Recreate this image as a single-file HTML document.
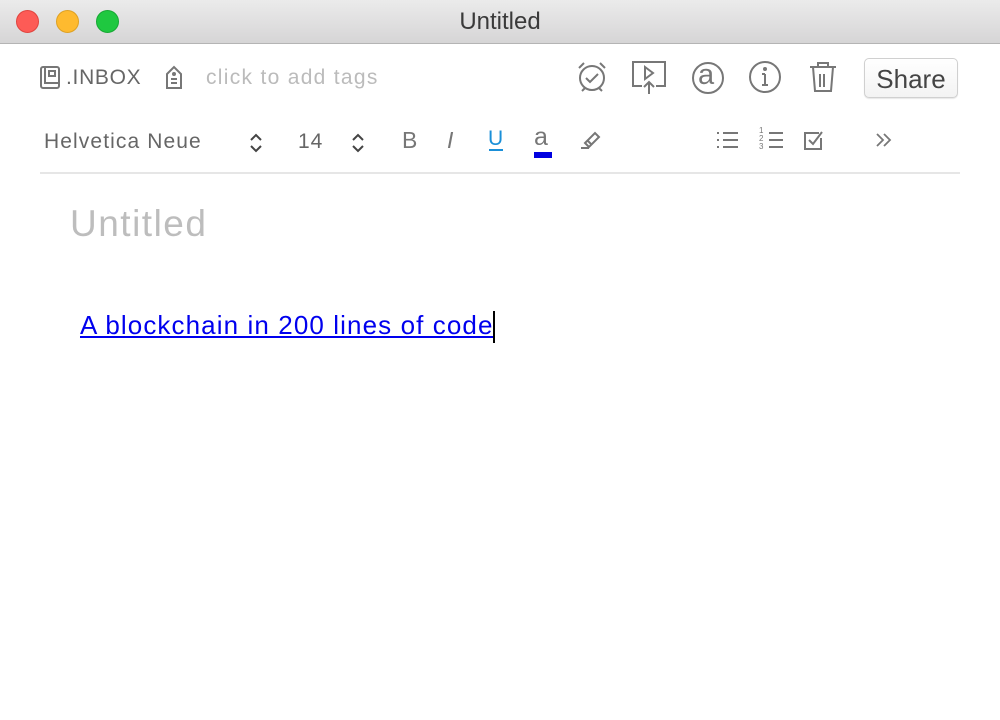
<!DOCTYPE html>
<html><head><style>
body{margin:0;width:1000px;height:720px;background:#fff;font-family:"Liberation Sans",sans-serif;position:relative;overflow:hidden}
.t{position:absolute;white-space:nowrap}
svg{position:absolute;overflow:visible}
</style></head><body>
<div style="position:absolute;left:0;top:0;width:1000px;height:43px;background:linear-gradient(#ebebeb,#d6d5d6);border-bottom:1px solid #b4b4b4"></div>
<div style="position:absolute;left:16px;top:10px;width:23px;height:23px;border-radius:50%;background:#fd5b56;box-sizing:border-box;border:1px solid #e0443e"></div>
<div style="position:absolute;left:56px;top:10px;width:23px;height:23px;border-radius:50%;background:#feba2f;box-sizing:border-box;border:1px solid #dea123"></div>
<div style="position:absolute;left:96px;top:10px;width:23px;height:23px;border-radius:50%;background:#1fc840;box-sizing:border-box;border:1px solid #17a834"></div>
<div class="t" style="left:0;width:1000px;text-align:center;top:8px;font-size:24px;color:#3a3a3a">Untitled</div>

<svg style="left:40px;top:66px" width="20" height="24" fill="none" stroke="#777" stroke-width="2"><rect x="1" y="1" width="18" height="21" rx="2"/><path d="M5 1v16h14M9 5h6v5h-6z"/></svg>
<div class="t" style="left:66px;top:66px;font-size:21px;color:#666;letter-spacing:0.7px">.INBOX</div>
<svg style="left:164px;top:65px" width="20" height="26" fill="none" stroke="#777" stroke-width="2"><path d="M3 9l7-7 7 7v14H3z"/><circle cx="10" cy="9" r="1" fill="#777"/><path d="M7 14h6M7 18h6"/></svg>
<div class="t" style="left:206px;top:66px;font-size:21px;color:#bbb;letter-spacing:1.3px">click to add tags</div>

<svg style="left:576px;top:60px" width="32" height="34" fill="none" stroke="#777" stroke-width="2"><circle cx="16" cy="18" r="12"/><path d="M10 18l4 4 8-8M3 8l5-5M29 8l-5-5M6 31l3-3M26 31l-3-3"/></svg>
<svg style="left:632px;top:61px" width="34" height="34" fill="none" stroke="#777" stroke-width="2"><path d="M10 25H1V1h32v24h-9"/><path d="M13 6l8 6-8 6z"/><path d="M17 33V21M12 26l5-5 5 5"/></svg>
<svg style="left:691px;top:61px" width="34" height="34" fill="none" stroke="#777" stroke-width="2"><circle cx="17" cy="17" r="15"/></svg>
<div class="t" style="left:698px;top:59px;font-size:29px;color:#777">a</div>
<svg style="left:748px;top:60px" width="34" height="34" fill="none" stroke="#777" stroke-width="2"><circle cx="17" cy="17" r="15"/><path d="M17 14v11M14 25h6M14 14h3"/><circle cx="17" cy="9" r="1" fill="#777"/></svg>
<svg style="left:808px;top:60px" width="30" height="34" fill="none" stroke="#777" stroke-width="2"><path d="M2 7h26M10 7V3h10v4M5 7l2 24h16l2-24M12 14v13M16 14v13"/></svg>
<div style="position:absolute;left:864px;top:58px;width:94px;height:40px;box-sizing:border-box;border:1px solid #d0d0d0;border-radius:5px;background:linear-gradient(#fff,#f3f3f3);box-shadow:0 1px 1px rgba(0,0,0,.1)"></div>
<div class="t" style="left:864px;width:94px;text-align:center;top:64px;font-size:26px;color:#444">Share</div>

<div class="t" style="left:44px;top:130px;font-size:21px;color:#666;letter-spacing:1.1px">Helvetica Neue</div>
<svg style="left:249px;top:133px" width="14" height="20" fill="none" stroke="#444" stroke-width="2"><path d="M2 7l5-5 5 5M2 13l5 5 5-5"/></svg>
<div class="t" style="left:298px;top:130px;font-size:21px;color:#666;letter-spacing:1px">14</div>
<svg style="left:351px;top:133px" width="14" height="20" fill="none" stroke="#444" stroke-width="2"><path d="M2 7l5-5 5 5M2 13l5 5 5-5"/></svg>
<div class="t" style="left:402px;top:127px;font-size:23px;color:#777">B</div>
<div class="t" style="left:447px;top:127px;font-size:23px;color:#777;font-style:italic">I</div>
<div class="t" style="left:488px;top:127px;font-size:21px;color:#1a8fd8">U</div>
<div style="position:absolute;left:489px;top:149px;width:14px;height:2px;background:#1a8fd8"></div>
<div class="t" style="left:534px;top:123px;font-size:25px;color:#777">a</div>
<div style="position:absolute;left:534px;top:152px;width:18px;height:6px;background:#0000e0"></div>
<svg style="left:580px;top:130px" width="24" height="20" fill="none" stroke="#777" stroke-width="2"><path d="M1 18h8M8 16l-3-3 10-10 4 4-10 10zM7 10l5 5"/></svg>
<svg style="left:716px;top:130px" width="24" height="20" fill="none" stroke="#777" stroke-width="2"><path d="M1 3h2M1 10h2M1 17h2M7 3h15M7 10h15M7 17h15"/></svg>
<div class="t" style="left:759px;top:127px;font-size:8px;line-height:8px;color:#777">1<br>2<br>3</div>
<svg style="left:768px;top:130px" width="16" height="20" fill="none" stroke="#777" stroke-width="2"><path d="M1 3h14M1 10h14M1 17h14"/></svg>
<svg style="left:804px;top:129px" width="24" height="22" fill="none" stroke="#777" stroke-width="2"><path d="M17 9v11H1V4h14M5 11l4 4 9-12"/></svg>
<svg style="left:876px;top:133px" width="16" height="14" fill="none" stroke="#777" stroke-width="1.8"><path d="M1 1l6 6-6 6M8 1l6 6-6 6"/></svg>
<div style="position:absolute;left:40px;top:172px;width:920px;height:2px;background:#e6e6e6"></div>

<div class="t" style="left:70px;top:203px;font-size:37px;color:#bdbdbd;letter-spacing:1.5px">Untitled</div>
<div class="t" style="left:80px;top:310px;font-size:26px;color:#0000ee;text-decoration:underline;letter-spacing:1.1px">A blockchain in 200 lines of code</div>
<div style="position:absolute;left:493px;top:311px;width:2px;height:32px;background:#000"></div>
</body></html>
